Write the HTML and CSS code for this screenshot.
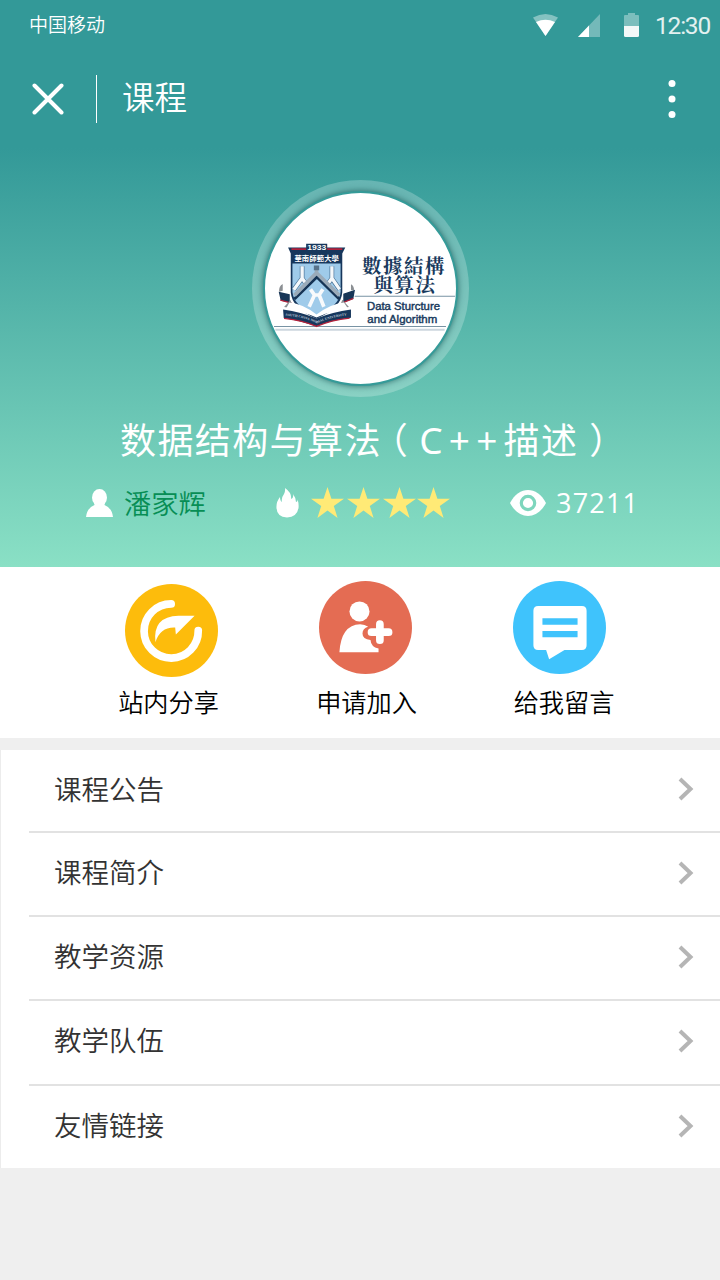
FILE: index.html
```html
<!DOCTYPE html>
<html lang="zh-CN">
<head>
<meta charset="utf-8">
<title>课程</title>
<link rel="stylesheet" href="styles.css">
</head>
<body>
<div class="page">
  <header class="hero">
    <div class="status">
      <span class="carrier">中国移动</span>
      <div class="status-right">
        <svg class="wifi" width="25" height="22" viewBox="0 0 25 22"><path d="M0 3.5Q12.500-3.500 25 3.500L12.500 22Z" fill="#fff" opacity=".4"/><path d="M3 8Q12.500 3.500 22 8L12.500 22Z" fill="#fff"/></svg>
        <svg class="signal" width="22" height="23" viewBox="0 0 22 23"><path d="M0 23L22 0V23Z" fill="#fff" opacity=".32"/><path d="M0 23L11 11.500V23Z" fill="#fff"/></svg>
        <svg class="battery" width="15" height="24" viewBox="0 0 15 24"><path d="M4 0h7v2h3q1 0 1 1v10H0V3q0-1 1-1h3z" fill="#fff" opacity=".36"/><path d="M0 13h15v9.500q0 1.500-1.500 1.500h-12Q0 24 0 22.500z" fill="#f3f8f8"/></svg>
        <span class="clock">12:30</span>
      </div>
    </div>
    <div class="appbar">
      <svg class="close" width="32" height="32" viewBox="0 0 32 32"><path d="M2.500 2.500L29.500 29.500M29.500 2.500L2.500 29.500" stroke="#fff" stroke-width="4" stroke-linecap="round"/></svg>
      <span class="divider"></span>
      <h1 class="bar-title">课程</h1>
      <svg class="more" width="8" height="40" viewBox="0 0 8 40" fill="#fff"><circle cx="4" cy="4.500" r="3.500"/><circle cx="4" cy="20" r="3.500"/><circle cx="4" cy="35.500" r="3.500"/></svg>
    </div>
    <div class="avatar">
      <div class="avatar-disc">
        <svg width="190" height="190" viewBox="78 71 568 568">
          <path d="M346 380H646M105 470H619" stroke="#7893a4" stroke-width="3"/>
          <path d="M109 480H615" stroke="#ccd6de" stroke-width="6"/>
          <path d="M119 366L152 374V398L125 393ZM347 360L312 372V398L342 388Z" fill="#183657"/>
          <path d="M124 391L157 400M342 386L308 400" stroke="#b3213b" stroke-width="4"/>
          <path d="M120 366Q119 350 131 343V363ZM344 361Q345 350 335 344V362ZM135 412L154 391L163 416ZM329 412L309 390L300 416Z" fill="#8b8f93"/>
          <path d="M147 234H201V223H264V234H318L309 252V368Q306 416 232 447Q158 416 155 368V252Z" fill="#17375c"/>
          <path d="M157 239H201M264 239H309" stroke="#b3213b" stroke-width="5"/>
          <path d="M160 282H304V366Q301 409 232 438Q163 409 160 366Z" fill="#9fcbea"/>
          <path d="M189 290V326L164 360M189 326L206 350M278 290V326L261 350M278 326L301 359" fill="none" stroke="#4a7397" stroke-width="14"/>
          <path d="M189 290V326L164 360M189 326L206 350M278 290V326L261 350M278 326L301 359" fill="none" stroke="#f4f8fb" stroke-width="10"/>
          <path d="M166 388L233 322L300 388" fill="none" stroke="#163455" stroke-width="9"/>
          <path d="M232 290V317M166 377L232 310L300 377" fill="none" stroke="#9babb9" stroke-width="11"/>
          <path d="M232 288V302" stroke="#58738a" stroke-width="16"/>
          <path d="M214 359L226 376H240L251 359M226 376L210 411M240 376L254 411" fill="none" stroke="#f8fafc" stroke-width="11"/>
          <path d="M132 419Q186 426 232 446Q280 426 335 419V444Q274 452 232 469Q185 453 134 445Z" fill="#17375c"/>
          <path d="M151 398Q192 402 232 434Q274 402 314 398L326 416Q273 423 232 443Q191 425 141 416Z" fill="#fff"/>
          <path d="M135 446Q191 452 232 470Q275 451 331 445" fill="none" stroke="#b3213b" stroke-width="4"/>
          <path id="ribbon" d="M139 438Q190 440 233 461Q277 440 330 437" fill="none"/>
          <text class="ribbon-text"><textPath href="#ribbon" textLength="190">SOUTH CHINA NORMAL UNIVERSITY</textPath></text>
          <text class="crest-year" x="204" y="240" textLength="57" lengthAdjust="spacingAndGlyphs">1933</text>
          <text class="crest-name" x="166" y="273" textLength="133">華南師範大學</text>
          <text class="logo-cn" x="368" y="311" textLength="246">數據結構</text>
          <text class="logo-cn" x="402" y="366" textLength="184">與算法</text>
          <text class="logo-en" x="383" y="421" textLength="218" lengthAdjust="spacingAndGlyphs">Data Sturcture</text>
          <text class="logo-en" x="384" y="461" textLength="209" lengthAdjust="spacingAndGlyphs">and Algorithm</text>
        </svg>
      </div>
    </div>
    <h2 class="course">数据结构与算法<span class="paren-open">（</span><span class="latin">C++</span>描述<span class="paren-close">）</span></h2>
    <div class="meta">
      <div class="teacher">
        <svg width="27" height="28" viewBox="0 0 27 28"><ellipse cx="13.500" cy="8.500" rx="7.500" ry="8.500" fill="#fff"/><path d="M8 13H19L18.500 16Q26 19 27 28H0Q1 19 8.500 16Z" fill="#fff"/></svg>
        <span>潘家辉</span>
      </div>
      <div class="rating">
        <svg class="flame" width="23" height="30" viewBox="0 0 23 30"><path d="M9 0Q16 5 15 11Q18 10 17 6Q20 10 20 14Q22 14 21.500 11Q23 16 22.500 20Q21 29 11 29.500Q1 29 0.500 20Q0 14 4 9Q4 13 6 14Q5 10 8 6Q9.500 3 9 0Z" fill="#fff"/></svg>
        <svg width="139" height="32" viewBox="0 0 139 32" fill="#ffea76"><path id="star" d="M16.500 0L20.400 11.800H33L22.800 19L26.600 31L16.500 23.600L6.400 31L10.200 19L0 11.800H12.600Z"/><use href="#star" x="36"/><use href="#star" x="72"/><use href="#star" x="106"/></svg>
      </div>
      <div class="views">
        <svg width="36" height="26" viewBox="0 0 36 26"><path d="M0 13C9-4.300 27-4.300 36 13C27 30.300 9 30.300 0 13Z" fill="#fff"/><circle cx="18" cy="13" r="6.700" fill="none" stroke="#7ed6bd" stroke-width="3.200"/></svg>
        <span>37211</span>
      </div>
    </div>
  </header>

  <nav class="actions">
    <a class="action share">
      <svg width="93" height="93" viewBox="0 0 278 278"><circle cx="139" cy="139" r="139" fill="#fdbc0c"/><path d="M138 59.500A81 81 0 1 0 219 139" fill="none" stroke="#fff" stroke-width="23" stroke-linecap="round"/><path d="M91 174Q82 97 160 95H208L152 151L150 130Q105 128 91 174Z" fill="#fff"/></svg>
      <span>站内分享</span>
    </a>
    <a class="action join">
      <svg width="93" height="93" viewBox="0 0 278 278"><circle cx="139" cy="139" r="139" fill="#e46c53"/><circle cx="121" cy="91" r="30" fill="#fff"/><path d="M61 213Q66 131 123 129Q137 130 147 137Q130 142 130 157Q130 175 154 176Q155 196 178 202V213Z" fill="#fff"/><path d="M182 129V177M157 153H208" stroke="#fff" stroke-width="23" stroke-linecap="round"/></svg>
      <span>申请加入</span>
    </a>
    <a class="action message">
      <svg width="93" height="93" viewBox="0 0 278 278"><circle cx="139" cy="139" r="139" fill="#3fc3fc"/><path d="M75 75H206Q220 75 220 89V192Q220 206 206 206H154L108 234L99 206H75Q61 206 61 192V89Q61 75 75 75Z" fill="#fff"/><path d="M88 121H193M88 159H193" stroke="#3fc3fc" stroke-width="19"/></svg>
      <span>给我留言</span>
    </a>
  </nav>

  <ul class="list">
    <li class="row"><span>课程公告</span><svg class="chev" width="16" height="24" viewBox="0 0 16 24"><path d="M2 2L12.500 12L2 22" fill="none" stroke="#b5b5b5" stroke-width="4"/></svg></li>
    <li class="row"><span>课程简介</span><svg class="chev" width="16" height="24" viewBox="0 0 16 24"><path d="M2 2L12.500 12L2 22" fill="none" stroke="#b5b5b5" stroke-width="4"/></svg></li>
    <li class="row"><span>教学资源</span><svg class="chev" width="16" height="24" viewBox="0 0 16 24"><path d="M2 2L12.500 12L2 22" fill="none" stroke="#b5b5b5" stroke-width="4"/></svg></li>
    <li class="row"><span>教学队伍</span><svg class="chev" width="16" height="24" viewBox="0 0 16 24"><path d="M2 2L12.500 12L2 22" fill="none" stroke="#b5b5b5" stroke-width="4"/></svg></li>
    <li class="row"><span>友情链接</span><svg class="chev" width="16" height="24" viewBox="0 0 16 24"><path d="M2 2L12.500 12L2 22" fill="none" stroke="#b5b5b5" stroke-width="4"/></svg></li>
  </ul>
</div>
</body>
</html>
```
FILE: styles.css
```css
* { box-sizing: border-box; }
body {
  margin: 0;
  background: #efefef;
  font-family: "Noto Sans CJK SC", sans-serif;
  font-weight: 350;
}
svg { display: block; flex: none; }
h1, h2, ul { margin: 0; padding: 0; font-weight: inherit; }
.page { width: 720px; height: 1280px; overflow: hidden; }

.hero {
  height: 567px;
  background: linear-gradient(#339998 0, #339998 148px, #8ae0c5 567px);
  color: #fff;
}
.status {
  height: 48px;
  padding: 0 9px 0 29px;
  display: flex;
  justify-content: space-between;
  align-items: center;
}
.carrier { font-size: 19px; line-height: 28px; }
.status-right { display: flex; align-items: center; padding-top: 2px; }
.signal { margin-left: 20px; }
.battery { margin-left: 24px; }
.clock {
  width: 56px;
  margin-left: 16px;
  padding-top: 1px;
  font: 400 24.500px/28px Roboto, sans-serif;
  letter-spacing: -1.2px;
  color: #e3f1f0;
}
.appbar {
  height: 100px;
  padding: 1px 44px 0 32px;
  display: flex;
  align-items: center;
}
.divider { width: 1px; height: 48px; margin-left: 32px; background: #fff; }
.bar-title { margin-left: 25px; font-size: 32.5px; line-height: 48px; padding-bottom: 6px; }
.more { margin-left: auto; }

.avatar {
  width: 217px;
  height: 217px;
  margin: 32px auto 0 252px;
  padding: 11px;
  border-radius: 50%;
  background: rgba(255, 255, 255, .23);
}
.avatar-disc {
  width: 195px;
  height: 195px;
  border: 2.500px solid #359b99;
  border-radius: 50%;
  background: #fff;
  box-shadow: 0 0 6px 0 rgba(20, 80, 80, .75);
  overflow: hidden;
}
.crest-year { font: 700 19px "Liberation Sans", sans-serif; fill: #fff; }
.crest-name { font: 700 22px "Noto Sans CJK TC", sans-serif; fill: #fff; }
.ribbon-text { font: 700 10px "Liberation Serif", serif; fill: #c8d3dd; }
.logo-cn { font: 700 58px "Noto Serif CJK TC", "Noto Sans CJK TC", serif; fill: #17395c; }
.logo-en { font: 400 31px "Liberation Sans", sans-serif; fill: #17395c; stroke: #17395c; stroke-width: 1.2px; }

.course {
  margin: 14px 0 0 120px;
  height: 54px;
  font-size: 36px;
  font-weight: 400;
  line-height: 54px;
  letter-spacing: 1.400px;
  white-space: nowrap;
}
.paren-open, .paren-close { font-feature-settings: "halt"; }
.paren-open { margin-left: 8px; margin-right: 10px; }
.paren-close { margin-left: 11px; }
.latin { font-family: "Noto Sans", sans-serif; font-size: 37px; letter-spacing: 6.200px; }
.meta { height: 36px; margin: 20px 80px 0 86px; display: flex; align-items: center; }
.teacher, .rating, .views { display: flex; align-items: center; }
.teacher { width: 190px; gap: 11px; font-size: 27.300px; line-height: 36px; color: #078e55; }
.teacher span { padding-bottom: 3px; }
.rating { width: 234px; gap: 12px; }
.views { gap: 10px; font: 400 27px/36px "Open Sans", "Noto Sans", sans-serif; letter-spacing: 1.200px; }
.rating, .views { flex: none; }
.teacher { flex: none; }

.actions {
  height: 171px;
  padding: 14px 64px 0 74px;
  display: grid;
  grid-template-columns: repeat(3, 194px);
  background: #fff;
  color: #000;
}
.action { display: flex; flex-direction: column; align-items: center; font-size: 25.200px; line-height: 36px; }
.action span { margin-top: 9px; }
.share { padding-top: 3px; }
.share span { margin: 6px 5px 0 0; }
.join span { margin-left: 3px; }
.message span { margin-left: 10px; }

.list {
  margin-top: 12px;
  height: 418px;
  border-left: 1px solid #ececec;
  background: #fff;
  list-style: none;
}
.row {
  height: 84.200px;
  margin-left: 28px;
  padding: 0 26px 3px 25px;
  display: flex;
  align-items: center;
  justify-content: space-between;
  border-bottom: 2px solid #e2e2e2;
  color: #333;
  font-size: 27.500px;
  line-height: 40px;
}
.row span { padding-bottom: 3px; }
.row:first-child { height: 83px; }
.row:last-child { border-bottom: 0; height: 82px; padding-bottom: 2px; }
```
